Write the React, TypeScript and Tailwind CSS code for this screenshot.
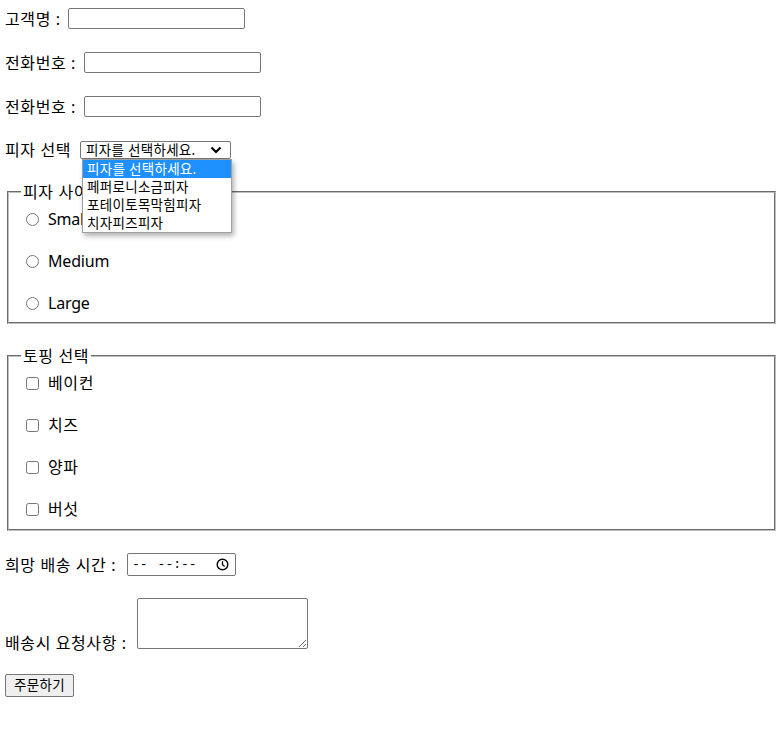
const options = ["피자를 선택하세요.", "페퍼로니소금피자", "포테이토목막힘피자", "치자피즈피자"];

const sizes = ["Small", "Medium", "Large"];
const toppings = ["베이컨", "치즈", "양파", "버섯"];

const App = () => {
  return (
    <div className="min-h-screen bg-white pb-[34px] pl-[5px] pt-[8px] text-[16px] text-black font-['Noto_Sans','Noto_Sans_CJK_KR',sans-serif]">
      <div className="flex h-[21px] items-center">
        <span className="w-[63px] leading-[20px] tracking-[0.6px]">고객명 :</span>
        <input type="text" className="h-[21px] w-[177px] rounded-[2px] border border-[#767676]" />
      </div>

      <div className="mt-[23px] flex h-[21px] items-center">
        <span className="w-[79px] leading-[20px] tracking-[0.6px]">전화번호 :</span>
        <input type="text" className="h-[21px] w-[177px] rounded-[2px] border border-[#767676]" />
      </div>

      <div className="mt-[23px] flex h-[21px] items-center">
        <span className="w-[79px] leading-[20px] tracking-[0.6px]">전화번호 :</span>
        <input type="text" className="h-[21px] w-[177px] rounded-[2px] border border-[#767676]" />
      </div>

      <div className="relative mt-[24px] flex h-[18px] items-center">
        <span className="w-[75px] leading-[20px] tracking-[0.6px]">피자 선택</span>
        <div className="flex h-[18px] w-[151px] items-center justify-between rounded-[2px] border border-[#767676] pl-[5px] pr-[8px] text-[13.5px] leading-[16px] tracking-[0.3px]">
          <span>피자를 선택하세요.</span>
          <svg width="12" height="8" viewBox="0 0 12 8" fill="none">
            <path d="M1.5 1.5 L6 6 L10.5 1.5" stroke="#000" strokeWidth="2.2" />
          </svg>
        </div>

        <ul className="absolute left-[77px] top-[18px] z-10 w-[150px] border border-[#a0a0a0] bg-white text-[13.5px] leading-[18px] tracking-[0.3px] shadow-[2px_3px_5px_rgba(0,0,0,0.3)]">
          {options.map((o, i) => (
            <li key={o} className={i === 0 ? "h-[18px] bg-[#1e90ff] pl-[4px] text-white" : "h-[18px] pl-[4px]"}>
              {o}
            </li>
          ))}
        </ul>
      </div>

      <fieldset className="ml-[2px] mt-[23px] w-[769px] border-2 border-[#c0c0c0] px-[12px] pb-[6px] pt-[4px] [border-style:groove]">
        <legend className="px-[2px] leading-[20px] tracking-[0.6px]">피자 사이즈</legend>
        <div className="flex flex-col gap-[16px]">
          {sizes.map((s) => (
            <label key={s} className="flex h-[26px] items-center">
              <input type="radio" name="size" className="ml-[5px] h-[13px] w-[13px]" />
              <span className="ml-[9px] tracking-[-0.2px]">{s}</span>
            </label>
          ))}
        </div>
      </fieldset>

      <fieldset className="ml-[2px] mt-[22px] w-[769px] border-2 border-[#c0c0c0] px-[12px] pb-[7px] pt-[4px] [border-style:groove]">
        <legend className="px-[2px] leading-[20px] tracking-[0.6px]">토핑 선택</legend>
        <div className="flex flex-col gap-[16px]">
          {toppings.map((t) => (
            <label key={t} className="flex h-[26px] items-center">
              <input type="checkbox" className="ml-[5px] h-[13px] w-[13px]" />
              <span className="ml-[9px] tracking-[0.6px]">{t}</span>
            </label>
          ))}
        </div>
      </fieldset>

      <div className="mt-[22px] flex h-[23px] items-center">
        <span className="w-[122px] leading-[20px] tracking-[0.6px]">희망 배송 시간 :</span>
        <div className="flex h-[23px] w-[109px] items-center rounded-[2px] border border-[#767676] pl-[4px] pr-[6px] text-[13px] font-['Liberation_Mono',monospace]">
          <span>--</span>
          <span className="ml-[10px]">--:--</span>
          <svg className="ml-auto" width="13" height="13" viewBox="0 0 13 13" fill="none">
            <circle cx="6.5" cy="6.5" r="5.3" stroke="#000" strokeWidth="1.4" />
            <path d="M6.5 3.3 V6.7 L8.6 8.6" stroke="#000" strokeWidth="1.3" />
          </svg>
        </div>
      </div>

      <div className="mt-[22px] flex items-end">
        <span className="w-[132px] leading-[22px] tracking-[0.6px]">배송시 요청사항 :</span>
        <textarea className="mb-[5px] h-[51px] w-[171px] resize rounded-[2px] border border-[#767676]" />
      </div>

      <button className="mt-[20px] h-[23px] w-[69px] rounded-[2px] border border-[#767676] bg-[#efefef] text-[13.5px] tracking-[0.3px]">
        주문하기
      </button>
    </div>
  );
};

export default App;
